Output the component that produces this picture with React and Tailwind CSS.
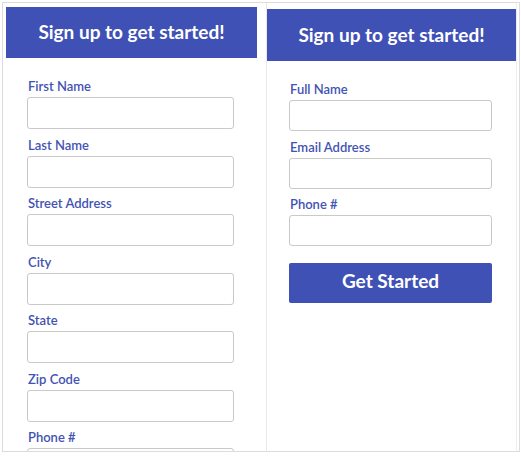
const leftFields = ['First Name', 'Last Name', 'Street Address', 'City', 'State', 'Zip Code', 'Phone #'];
const rightFields = ['Full Name', 'Email Address', 'Phone #'];

function Field({ label, width, height }) {
  return (
    <div className="flex flex-col mb-[7.5px]">
      <label className="h-[16px] leading-[16px] text-[13px] font-semibold text-[#4353b3] mb-[3px] pl-[1px]">
        {label}
      </label>
      <input
        type="text"
        className={`${width} ${height} rounded-[3px] border border-[#c9c9c9] bg-white outline-none`}
      />
    </div>
  );
}

export default function App() {
  return (
    <div className="w-[521px] h-[456px] bg-white pt-[2px] pl-[2px] font-['Lato','Liberation_Sans',sans-serif]">
      <div className="w-[518px] h-[450px] border border-[#dcdcdc] flex overflow-hidden">
        {/* long form */}
        <div className="w-[263px] h-full pl-[3px] pt-[4px] overflow-hidden">
          <div className="w-[251px] h-[51px] bg-[#3f51b5] flex items-center justify-center">
            <h1 className="text-white text-[19px] font-bold">Sign up to get started!</h1>
          </div>
          <form className="pl-[21px] pt-[20px]">
            {leftFields.map((f) => (
              <Field key={f} label={f} width="w-[207px]" height="h-[32px]" />
            ))}
          </form>
        </div>

        {/* short form */}
        <div className="flex-1 h-full border-l border-[#e8e8e8] flex">
          <div className="w-[250px] h-full border-r border-[#ededed] pt-[6px]">
            <div className="w-[249px] h-[52px] bg-[#3f51b5] flex items-center justify-center">
              <h1 className="text-white text-[19px] font-bold">Sign up to get started!</h1>
            </div>
            <form className="pl-[22px] pt-[20px]">
              {rightFields.map((f) => (
                <Field key={f} label={f} width="w-[203px]" height="h-[31px]" />
              ))}
              <button
                type="button"
                className="mt-[9.5px] w-[203px] h-[40px] pb-[3px] rounded-[2px] bg-[#3f51b5] text-white text-[19px] font-bold"
              >
                Get Started
              </button>
            </form>
          </div>
        </div>
      </div>
    </div>
  );
}
